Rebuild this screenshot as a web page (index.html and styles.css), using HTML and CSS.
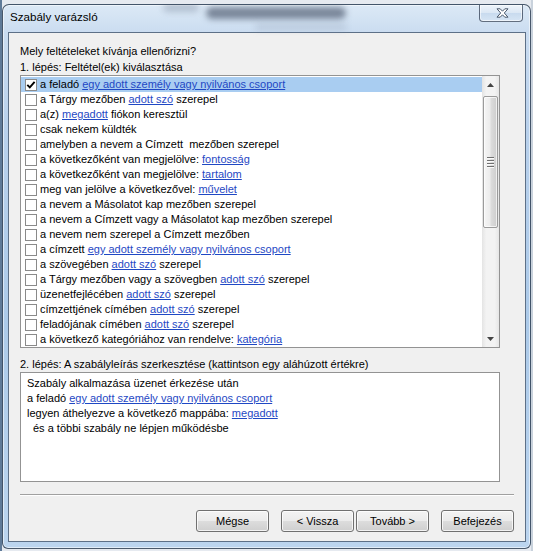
FILE: index.html
```html
<!DOCTYPE html>
<html lang="hu">
<head>
<meta charset="utf-8">
<title>Szabály varázsló</title>
<link rel="stylesheet" href="styles.css">
</head>
<body>
<div class="screen">
  <div class="window">
    <div class="blob blob-a"></div>
    <div class="blob blob-b"></div>
    <div class="blob blob-c"></div>
    <div class="titlebar">
      <span class="title">Szabály varázsló</span>
      <div class="close">
        <svg width="13" height="10" viewBox="0 0 13 10"><path d="M1 0.8 L4.2 0.8 L6.5 3.2 L8.8 0.8 L12 0.8 L8.3 5 L12 9.2 L8.8 9.2 L6.5 6.8 L4.2 9.2 L1 9.2 L4.7 5 Z" fill="#ffffff" stroke="#3a4a5e" stroke-width="0.9" stroke-linejoin="round"/></svg>
      </div>
    </div>
    <div class="client">
      <div class="label">Mely feltételeket kívánja ellenőrizni?</div>
      <div class="label">1. lépés: Feltétel(ek) kiválasztása</div>
      <div class="listbox">
        <div class="rows">
          <div class="row selected"><span class="cb"><svg width="10" height="10" viewBox="0 0 10 10"><path d="M1.3 4.8 L3.8 7.4 L8.6 1.8" fill="none" stroke="#000" stroke-width="1.9"/></svg></span><span>a feladó <span class="link">egy adott személy vagy nyilvános csoport</span></span></div>
          <div class="row"><span class="cb"></span><span>a Tárgy mezőben <span class="link">adott szó</span> szerepel</span></div>
          <div class="row"><span class="cb"></span><span>a(z) <span class="link">megadott</span> fiókon keresztül</span></div>
          <div class="row"><span class="cb"></span><span>csak nekem küldték</span></div>
          <div class="row"><span class="cb"></span><span>amelyben a nevem a Címzett&nbsp; mezőben szerepel</span></div>
          <div class="row"><span class="cb"></span><span>a következőként van megjelölve: <span class="link">fontosság</span></span></div>
          <div class="row"><span class="cb"></span><span>a következőként van megjelölve: <span class="link">tartalom</span></span></div>
          <div class="row"><span class="cb"></span><span>meg van jelölve a következővel: <span class="link">művelet</span></span></div>
          <div class="row"><span class="cb"></span><span>a nevem a Másolatot kap mezőben szerepel</span></div>
          <div class="row"><span class="cb"></span><span>a nevem a Címzett vagy a Másolatot kap mezőben szerepel</span></div>
          <div class="row"><span class="cb"></span><span>a nevem nem szerepel a Címzett mezőben</span></div>
          <div class="row"><span class="cb"></span><span>a címzett <span class="link">egy adott személy vagy nyilvános csoport</span></span></div>
          <div class="row"><span class="cb"></span><span>a szövegében <span class="link">adott szó</span> szerepel</span></div>
          <div class="row"><span class="cb"></span><span>a Tárgy mezőben vagy a szövegben <span class="link">adott szó</span> szerepel</span></div>
          <div class="row"><span class="cb"></span><span>üzenetfejlécében <span class="link">adott szó</span> szerepel</span></div>
          <div class="row"><span class="cb"></span><span>címzettjének címében <span class="link">adott szó</span> szerepel</span></div>
          <div class="row"><span class="cb"></span><span>feladójának címében <span class="link">adott szó</span> szerepel</span></div>
          <div class="row"><span class="cb"></span><span>a következő kategóriához van rendelve: <span class="link">kategória</span></span></div>
        </div>
        <div class="scrollbar">
          <div class="sb-btn"><svg width="7" height="4" viewBox="0 0 7 4"><path d="M0 4 L3.5 0 L7 4 Z" fill="#444"/></svg></div>
          <div class="track">
            <div class="thumb">
              <div class="grip"><i></i><i></i><i></i><i></i></div>
            </div>
          </div>
          <div class="sb-btn"><svg width="7" height="4" viewBox="0 0 7 4"><path d="M0 0 L3.5 4 L7 0 Z" fill="#444"/></svg></div>
        </div>
      </div>
      <div class="label step2">2. lépés: A szabályleírás szerkesztése (kattintson egy aláhúzott értékre)</div>
      <div class="desc">
        <div>Szabály alkalmazása üzenet érkezése után</div>
        <div>a feladó <span class="link">egy adott személy vagy nyilvános csoport</span></div>
        <div>legyen áthelyezve a következő mappába: <span class="link">megadott</span></div>
        <div class="indent">és a többi szabály ne lépjen működésbe</div>
      </div>
      <div class="separator"></div>
      <div class="buttons">
        <div class="btn">Mégse</div>
        <div class="btn gap-big">&lt; Vissza</div>
        <div class="btn gap-small">Tovább &gt;</div>
        <div class="btn gap-big">Befejezés</div>
      </div>
    </div>
  </div>
</div>
</body>
</html>
```

FILE: styles.css
```css
html, body {
  margin: 0;
  padding: 0;
}

body {
  width: 533px;
  height: 551px;
  overflow: hidden;
  font-family: "Liberation Sans", Arial, sans-serif;
  font-size: 11px;
  color: #000;
}

.screen {
  width: 533px;
  height: 551px;
  box-sizing: border-box;
  padding: 4px 2px 2px 2px;
  background: linear-gradient(to right, #5f7a98 0, #5f7a98 2px, #e6eaf0 2px, #e6eaf0 531px, #c9d2dc 531px);
}

.window {
  position: relative;
  height: 545px;
  box-sizing: border-box;
  border: 1px solid rgba(38, 52, 72, 0.8);
  border-radius: 7px 7px 6px 6px;
  background: linear-gradient(to bottom, #dce9f6 0, #cadcf0 28px, #b9d1ec 120px, #accae9 320px, #bcd5ef 545px);
  box-shadow: inset 0 0 0 1px rgba(255, 255, 255, 0.55);
  padding: 0 4px 6px 5px;
  display: flex;
  flex-direction: column;
  overflow: hidden;
}

.blob {
  position: absolute;
  border-radius: 6px;
  filter: blur(3px);
}

.blob-a {
  left: 203px;
  top: 2px;
  width: 140px;
  height: 12px;
  background: rgba(60, 72, 94, 0.6);
}

.blob-b {
  left: 160px;
  top: -2px;
  width: 36px;
  height: 9px;
  background: rgba(110, 122, 142, 0.35);
}

.blob-c {
  left: 252px;
  top: 19px;
  width: 92px;
  height: 6px;
  background: rgba(140, 152, 172, 0.3);
}

.titlebar {
  position: relative;
  height: 27px;
  display: flex;
  justify-content: space-between;
  align-items: flex-start;
}

.title {
  padding: 4px 0 0 2px;
  line-height: 15px;
  font-size: 11.6px;
  color: #000;
}

.close {
  width: 44px;
  height: 17px;
  margin-right: 3px;
  box-sizing: border-box;
  border: 1px solid rgba(40, 54, 74, 0.7);
  border-top: none;
  border-radius: 0 0 4px 4px;
  background: linear-gradient(to bottom, #eef4fa 0, #dbe7f4 50%, #c8daee 51%, #d6e5f4 100%);
  box-shadow: inset 0 0 0 1px rgba(255, 255, 255, 0.6);
  display: flex;
  align-items: center;
  justify-content: center;
  padding-left: 3px;
}

.close svg {
  display: block;
}

.client {
  flex: 1;
  box-sizing: border-box;
  background: #f0f0f0;
  border: 1px solid #5d7087;
  padding: 10px 11px 0 11px;
  display: flex;
  flex-direction: column;
}

.label {
  height: 16px;
  line-height: 16px;
  white-space: nowrap;
}

.listbox {
  width: 480px;
  height: 273px;
  box-sizing: border-box;
  border: 1px solid #939393;
  background: #fff;
  display: flex;
}

.rows {
  flex: 1;
  padding-top: 1px;
  overflow: hidden;
}

.row {
  height: 15px;
  line-height: 15px;
  display: flex;
  align-items: center;
  padding-left: 4px;
  white-space: nowrap;
}

.row.selected {
  background: #a9cdf1;
}

.cb {
  width: 12px;
  height: 12px;
  box-sizing: border-box;
  border: 1px solid #8a8a8a;
  background: #fff;
  margin-right: 3px;
  flex: none;
  display: flex;
  align-items: center;
  justify-content: center;
}

.cb svg {
  display: block;
}

.link {
  color: #1f48c4;
  text-decoration: underline;
}

.scrollbar {
  width: 17px;
  flex: none;
  display: flex;
  flex-direction: column;
  background: linear-gradient(to right, #e4e4e4 0, #f3f3f3 25%, #f3f3f3 75%, #e6e6e6 100%);
}

.sb-btn {
  height: 17px;
  flex: none;
  display: flex;
  align-items: center;
  justify-content: center;
}

.sb-btn svg {
  display: block;
}

.track {
  flex: 1;
  padding: 3px 1px 0 1px;
}

.thumb {
  height: 132px;
  box-sizing: border-box;
  border: 1px solid #9b9b9b;
  border-radius: 2px;
  background: linear-gradient(to right, #f6f6f6 0, #ececec 45%, #dcdcdc 55%, #cdcdcd 100%);
  box-shadow: inset 0 0 0 1px rgba(255, 255, 255, 0.7);
  display: flex;
  align-items: center;
  justify-content: center;
}

.grip {
  display: flex;
  flex-direction: column;
  gap: 1px;
}

.grip i {
  display: block;
  width: 7px;
  height: 1px;
  background: #707070;
  border-bottom: 1px solid #fbfbfb;
}

.step2 {
  margin-top: 8px;
}

.desc {
  width: 480px;
  height: 110px;
  box-sizing: border-box;
  border: 1px solid #939393;
  background: #fff;
  padding: 3px 6px;
  line-height: 15px;
  white-space: nowrap;
}

.indent {
  padding-left: 6px;
}

.separator {
  margin-top: 12px;
  height: 0;
  border-top: 1px solid #a0a0a0;
  border-bottom: 1px solid #ffffff;
}

.buttons {
  margin-top: 14px;
  display: flex;
  justify-content: flex-end;
}

.btn {
  width: 73px;
  height: 22px;
  box-sizing: border-box;
  border: 1px solid #707070;
  border-radius: 3px;
  background: linear-gradient(to bottom, #f3f3f3 0, #ebebeb 50%, #dddddd 50%, #cfcfcf 100%);
  box-shadow: inset 0 0 0 1px rgba(255, 255, 255, 0.75);
  display: flex;
  align-items: center;
  justify-content: center;
  white-space: nowrap;
}

.gap-big {
  margin-left: 12px;
}

.gap-small {
  margin-left: 2px;
}
```
